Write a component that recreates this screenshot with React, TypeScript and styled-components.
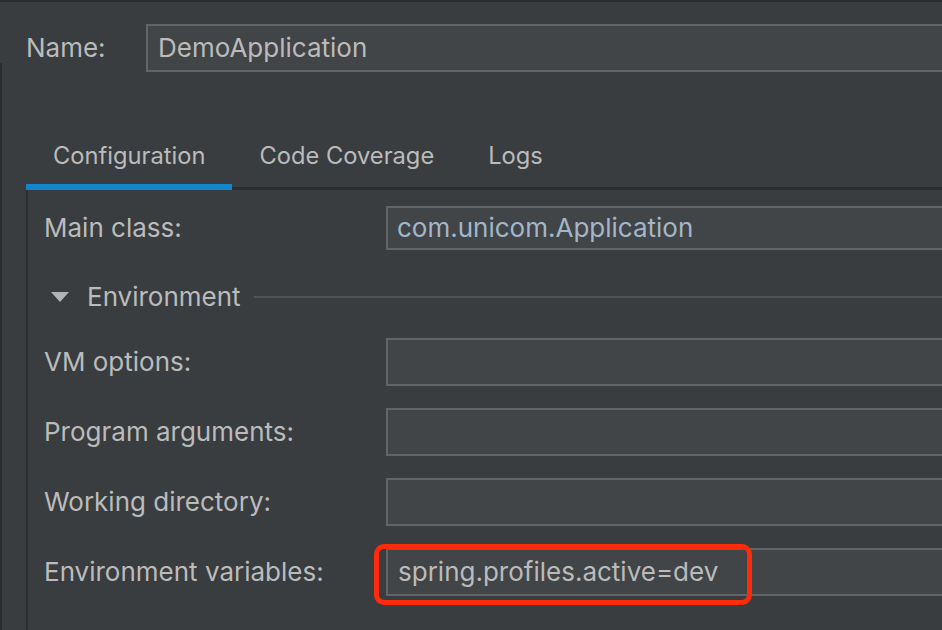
import React from "react";
import styled, { createGlobalStyle } from "styled-components";

const Global = createGlobalStyle`
  html, body { margin: 0; padding: 0; background: #393d40; }
  body { font-family: Inter, "Open Sans", "Liberation Sans", sans-serif; }
  * { box-sizing: border-box; }
`;

const Window = styled.div`
  width: 942px;
  height: 630px;
  overflow: hidden;
  display: flex;
  background: #393d40;
  border-top: 2px solid #2b2d2f;
  font-family: Inter, "Open Sans", "Liberation Sans", sans-serif;
  font-size: 26px;
  color: #bbbbbb;
`;

const Rail = styled.div`
  width: 2px;
  flex: none;
  margin-top: 61px;
  background: #2b2d2f;
`;

const Main = styled.div`
  flex: 1;
  min-width: 0;
  display: flex;
  flex-direction: column;
`;

const NameRow = styled.div`
  display: flex;
  align-items: center;
  padding: 22px 0 0 24px;
`;

const NameLabel = styled.div`
  width: 120px;
  flex: none;
  line-height: 32px;
`;

const TextField = styled.div<{ $tone?: "blue" | "plain"; $h?: number }>`
  position: relative;
  flex: 1;
  height: ${(p) => p.$h ?? 48}px;
  margin-right: -14px;
  background: #414548;
  border: 2px solid #626465;
  display: flex;
  align-items: center;
  padding-left: ${(p) => (p.$tone === "blue" ? 9 : 10)}px;
  line-height: 32px;
  white-space: nowrap;
  color: ${(p) => (p.$tone === "blue" ? "#a3b6c8" : "#bbbbbb")};
`;

const TabBar = styled.div`
  display: flex;
  align-items: flex-end;
  margin: 56px 0 0 24px;
  border-bottom: 3px solid #2b2d2f;
`;

const Tab = styled.div<{ $active?: boolean }>`
  padding: 12px 27px 12px;
  font-size: 23.7px;
  line-height: 32px;
  border-bottom: 6px solid ${(p) => (p.$active ? "#1186cc" : "transparent")};
  margin-bottom: -3px;
  color: #bbbbbb;
`;

const Panel = styled.div`
  flex: 1;
  margin-left: 24px;
  border-left: 2px solid #2b2d2f;
  padding: 16px 0 0 16px;
  display: flex;
  flex-direction: column;
`;

const FieldRow = styled.div`
  display: grid;
  grid-template-columns: 342px 1fr;
  align-items: center;
`;

const Label = styled.div`
  line-height: 32px;
  white-space: nowrap;
`;

const SectionHeader = styled.div`
  height: 88px;
  padding-top: 6px;
  display: flex;
  align-items: center;
`;

const Triangle = styled.svg`
  margin-left: 7px;
  flex: none;
`;

const SectionTitle = styled.div`
  margin-left: 18px;
  line-height: 32px;
`;

const SectionLine = styled.div`
  flex: 1;
  height: 2px;
  margin-left: 13px;
  background: #505356;
`;

const Rows = styled.div`
  display: flex;
  flex-direction: column;
  gap: 22px;
`;

const Highlight = styled.div`
  position: absolute;
  left: -14px;
  top: -6px;
  width: 378px;
  height: 61px;
  border: 5px solid #ff2b0a;
  border-radius: 10px;
  pointer-events: none;
`;

export default function App() {
  return (
    <>
      <Global />
      <Window>
        <Rail />
        <Main>
          <NameRow>
            <NameLabel>Name:</NameLabel>
            <TextField>DemoApplication</TextField>
          </NameRow>
          <TabBar>
            <Tab $active>Configuration</Tab>
            <Tab>Code Coverage</Tab>
            <Tab>Logs</Tab>
          </TabBar>
          <Panel>
            <FieldRow>
              <Label>Main class:</Label>
              <TextField $tone="blue" $h={44}>com.unicom.Application</TextField>
            </FieldRow>
            <SectionHeader>
              <Triangle width="18" height="10" viewBox="0 0 18 10">
                <path d="M0 0 H18 L9 10 Z" fill="#b3b3b3" />
              </Triangle>
              <SectionTitle>Environment</SectionTitle>
              <SectionLine />
            </SectionHeader>
            <Rows>
              <FieldRow>
                <Label>VM options:</Label>
                <TextField />
              </FieldRow>
              <FieldRow>
                <Label>Program arguments:</Label>
                <TextField />
              </FieldRow>
              <FieldRow>
                <Label>Working directory:</Label>
                <TextField />
              </FieldRow>
              <FieldRow>
                <Label>Environment variables:</Label>
                <TextField>
                  spring.profiles.active=dev
                  <Highlight />
                </TextField>
              </FieldRow>
            </Rows>
          </Panel>
        </Main>
      </Window>
    </>
  );
}
